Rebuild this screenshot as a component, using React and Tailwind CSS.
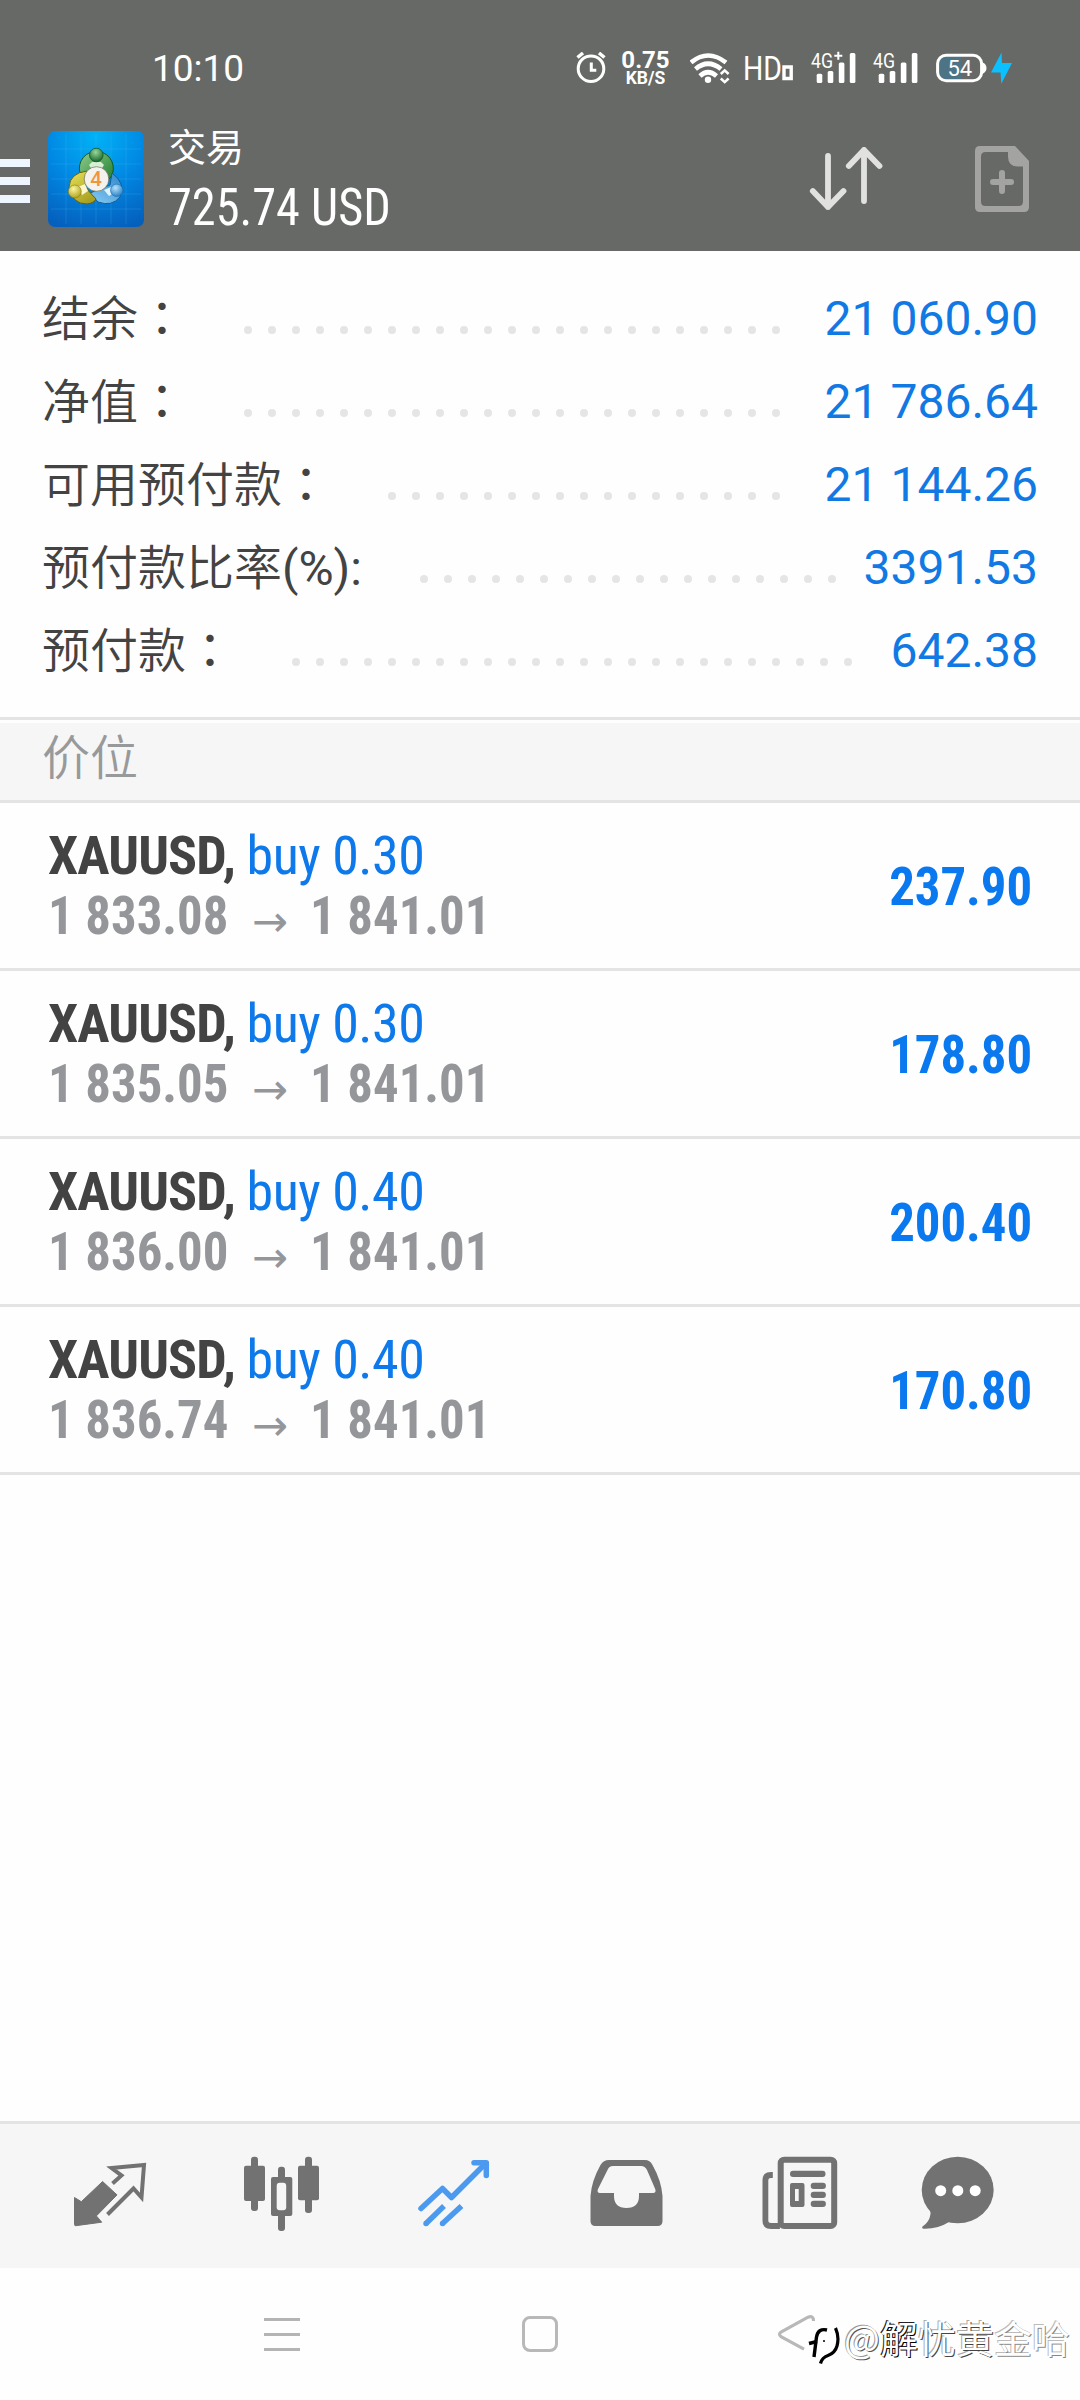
const summary = [
  { name: "结余", suffix: "：", value: "21 060.90", dots: 23 },
  { name: "净值", suffix: "：", value: "21 786.64", dots: 23 },
  { name: "可用预付款", suffix: "：", value: "21 144.26", dots: 17 },
  { name: "预付款比率", suffix: "(%):", value: "3391.53", dots: 18 },
  { name: "预付款", suffix: "：", value: "642.38", dots: 24 },
];

const positions = [
  { symbol: "XAUUSD", side: "buy 0.30", open: "1 833.08", current: "1 841.01", profit: "237.90" },
  { symbol: "XAUUSD", side: "buy 0.30", open: "1 835.05", current: "1 841.01", profit: "178.80" },
  { symbol: "XAUUSD", side: "buy 0.40", open: "1 836.00", current: "1 841.01", profit: "200.40" },
  { symbol: "XAUUSD", side: "buy 0.40", open: "1 836.74", current: "1 841.01", profit: "170.80" },
];

function Signal({ label, plus }) {
  return (
    <svg className="h-8 w-[45px] shrink-0 overflow-visible" viewBox="811 52 45 32" fill="#fff">
      <text x="811" y="67.5" fontSize="19.5" textLength="22" lengthAdjust="spacingAndGlyphs" className="font-['Roboto']">
        {label}
      </text>
      {plus && <path d="M834.3 55.8h8M838.3 51.8v8" stroke="#fff" strokeWidth="2" />}
      <rect x="816.7" y="73.7" width="5.6" height="9.3" rx="1.5" />
      <rect x="827.7" y="71" width="5.6" height="12" rx="1.5" />
      <rect x="838.8" y="62.5" width="5.6" height="20.5" rx="1.5" />
      <rect x="849.8" y="53" width="5.6" height="30" rx="1.5" />
    </svg>
  );
}

function StatusBar() {
  return (
    <div className="flex h-[118px] items-center pt-[18px] pr-[68px] pl-[152px] font-['Roboto',sans-serif]">
      <span className="text-[37px] leading-none">10:10</span>
      {/* Alarm */}
      <svg className="ml-auto h-8 w-[30px]" viewBox="576 54 30 32" fill="none" stroke="#fff">
        <circle cx="591" cy="70.7" r="12.8" strokeWidth="3" />
        <path d="M577.5 59.5l5.5-4.5M604.5 59.5l-5.5-4.5" strokeWidth="3.5" />
        <path d="M591.3 64.5v7.8h5" strokeWidth="3" />
      </svg>
      <div className="ml-[14px] flex w-[51px] flex-col items-center font-bold">
        <span className="text-[24px] leading-[20px]">0.75</span>
        <span className="text-[17.5px] leading-[16px]">KB/S</span>
      </div>
      {/* Wifi */}
      <svg className="ml-[19px] h-8 w-10" viewBox="690 52 40 32" fill="none" stroke="#fff">
        <path d="M691 62.5Q708 48.5 726 62.5" strokeWidth="4.6" />
        <path d="M695.5 69Q708 58.5 721 69" strokeWidth="4.6" />
        <path d="M700 76Q708 68.5 716.5 76" strokeWidth="4.6" />
        <circle cx="708" cy="79.7" r="3.2" fill="#fff" stroke="none" />
        <path d="M720.8 74l3.9-3.6 3.9 3.6M720.8 78.5l3.9 3.6 3.9-3.6" strokeWidth="2.6" />
      </svg>
      <svg className="ml-[14px] h-8 w-[50px] overflow-visible" viewBox="744 52 50 32" fill="#fff">
        <text x="743" y="80" fontSize="33" textLength="39" lengthAdjust="spacingAndGlyphs" className="font-['Roboto']">
          HD
        </text>
        <path d="M784 67h7.2v11.5H784z" fill="none" stroke="#fff" strokeWidth="3.4" />
      </svg>
      <div className="ml-[17px] flex gap-[17px]">
        <Signal label="4G" plus />
        <Signal label="4G" />
      </div>
      {/* Battery */}
      <svg className="ml-[17px] h-8 w-[77px]" viewBox="935 52 77 32" fill="none">
        <path d="M946 55.3h15v25.4h-15q-8.5 0-8.5-8.5v-8.4q0-8.5 8.5-8.5z" fill="#4c7485" />
        <rect x="937.6" y="55.3" width="44" height="25.4" rx="8.5" stroke="#fff" strokeWidth="3" />
        <path d="M982 62q4.5 2 4.5 6t-4.5 6z" fill="#fff" />
        <text x="947.5" y="75.7" fontSize="22" fill="#fff" className="font-['Roboto']">
          54
        </text>
        <path d="M1001.5 52.5l-10.5 20h9.5l.8 11.3 10.7-20.8h-10z" fill="#0bc0ff" />
      </svg>
    </div>
  );
}

function AppLogo() {
  return (
    <svg className="ml-[18px] h-24 w-24 shrink-0" viewBox="0 0 96 96">
      <defs>
        <radialGradient id="sky" cx="0.5" cy="0.05" r="1">
          <stop offset="0" stopColor="#02b2f6" />
          <stop offset="0.5" stopColor="#0089e4" />
          <stop offset="1" stopColor="#0560bd" />
        </radialGradient>
        <linearGradient id="green" x1="0" y1="0" x2="1" y2="1">
          <stop offset="0" stopColor="#8fce8f" />
          <stop offset="1" stopColor="#1e7a2c" />
        </linearGradient>
        <linearGradient id="yellow" x1="0" y1="0" x2="0.6" y2="1">
          <stop offset="0" stopColor="#e9e35a" />
          <stop offset="1" stopColor="#a8a022" />
        </linearGradient>
        <linearGradient id="blue" x1="1" y1="0" x2="0.3" y2="1">
          <stop offset="0" stopColor="#2f86cc" />
          <stop offset="1" stopColor="#7cc4ef" />
        </linearGradient>
        <radialGradient id="greenHead" cx="0.45" cy="0.3" r="0.7">
          <stop offset="0" stopColor="#9ad79b" />
          <stop offset="1" stopColor="#17682a" />
        </radialGradient>
        <radialGradient id="yellowHead" cx="0.4" cy="0.3" r="0.7">
          <stop offset="0" stopColor="#fbf6a0" />
          <stop offset="1" stopColor="#b3a520" />
        </radialGradient>
        <radialGradient id="blueHead" cx="0.4" cy="0.3" r="0.7">
          <stop offset="0" stopColor="#b5e2fb" />
          <stop offset="1" stopColor="#2a83c9" />
        </radialGradient>
      </defs>
      <rect width="96" height="96" rx="7" fill="url(#sky)" />
      <path
        d="M18 3v90M33 3v90M48 3v90M63 3v90M78 3v90M3 18h90M3 33h90M3 48h90M3 63h90M3 78h90"
        stroke="#5cc4f5"
        strokeOpacity="0.25"
        strokeWidth="0.8"
      />
      <path d="M32 42A17 17 0 1 1 63 46L56 53 34 42z" fill="url(#green)" stroke="#12591f" strokeWidth="1" />
      <path d="M64 42Q78 52 72 66Q64 76 50 71L42 62 62 54z" fill="url(#blue)" stroke="#155a97" strokeWidth="1" />
      <path d="M39 40Q22 42 21 56Q24 73 39 73Q46 72 48 68L37 56z" fill="url(#yellow)" stroke="#665f12" strokeWidth="1" />
      <path d="M41 34l3-3h9l3 3-4 6h-7z" fill="#d5f0d4" />
      <path d="M30 56l7-3 3 7-6 4z" fill="#fbf7c8" />
      <path d="M56 59l7-3 1 7-3 2z" fill="#dff3ff" />
      <circle cx="48.3" cy="24" r="6.8" fill="url(#greenHead)" stroke="#12591f" strokeWidth="0.8" />
      <circle cx="26.8" cy="60.5" r="6.5" fill="url(#yellowHead)" stroke="#857a18" strokeWidth="0.6" />
      <circle cx="68.7" cy="59.3" r="6.2" fill="url(#blueHead)" stroke="#1c69ad" strokeWidth="0.6" />
      <circle cx="48.5" cy="48" r="12.3" fill="#f4f2ee" stroke="#5b5b3a" strokeWidth="0.6" />
      <text x="48" y="55.3" textAnchor="middle" fontSize="20.5" fill="#f0953e" className="font-['Roboto'] font-medium">
        4
      </text>
    </svg>
  );
}

function Header() {
  return (
    <header className="h-[251px] bg-[#676966] text-white">
      <StatusBar />
      <div className="flex h-[122px] items-center pr-[51px]">
        <div className="mt-1 flex w-[30px] flex-col gap-2.5">
          <div className="h-2 bg-[#edf6fe]" />
          <div className="h-2 bg-[#edf6fe]" />
          <div className="h-2 bg-[#edf6fe]" />
        </div>
        <AppLogo />
        <div className="ml-6 flex flex-col">
          <span className="h-[53px] font-['Noto_Sans_CJK_SC',sans-serif] text-[38px] leading-[49px]">交易</span>
          <span className="h-[66px] origin-left scale-x-[0.92] font-['Roboto_Condensed',sans-serif] text-[52.5px] leading-[69px] font-[450]">
            725.74 USD
          </span>
        </div>
        <svg
          className="ml-auto h-[66px] w-[76px]"
          viewBox="808 146 76 66"
          fill="none"
          stroke="#e1e2e0"
          strokeWidth="5.8"
          strokeLinecap="round"
          strokeLinejoin="round"
        >
          <path d="M828 156v51M812.8 191L828 207l15.5-16" />
          <path d="M864 201v-51M848.8 166L864 150l15.5 16" />
        </svg>
        <svg className="ml-[91px] h-[66px] w-[54px]" viewBox="975 146 54 66" fill="#a3a4a2">
          <path
            fillRule="evenodd"
            d="M980 146h35l14 15v46q0 5-5 5h-44q-5 0-5-5v-56q0-5 5-5zm5.5 6q-4.5 0-4.5 4.5v45q0 4.5 4.5 4.5h33q4.5 0 4.5-4.5v-35h-5q-10 0-10-10v-4.5z"
          />
          <path d="M1002 173v18M993 182h18" stroke="#a3a4a2" strokeWidth="6" strokeLinecap="round" />
        </svg>
      </div>
    </header>
  );
}

function SummaryRow({ row }) {
  return (
    <div className="flex h-[83px] items-center">
      <span className="-mt-[3px] ml-[-1px] font-['Roboto','Noto_Sans_CJK_TC',sans-serif] text-[48px] leading-[80px] whitespace-nowrap text-[#434343]">
        <span className="font-['Noto_Sans_CJK_SC'] font-[350]">{row.name}</span>
        {row.suffix}
      </span>
      <div className="mt-[22px] ml-[58px] flex gap-4">
        {Array.from({ length: row.dots }, (_, i) => (
          <i key={i} className="size-2 rounded-full bg-[#e5e5e5]" />
        ))}
      </div>
      <span className="ml-auto font-['Roboto',sans-serif] text-[48px] leading-none whitespace-nowrap text-[#1179e4]">
        {row.value}
      </span>
    </div>
  );
}

function PositionRow({ item }) {
  return (
    <div className="flex h-[168px] items-center justify-between border-b-[3px] border-[#e4e4e4] px-[48px] font-['Roboto_Condensed',sans-serif] text-[54px]">
      <div className="flex flex-col">
        <div className="h-[59px] leading-[57px] tracking-[-0.9px] whitespace-nowrap">
          <span className="font-bold text-[#434343]">{item.symbol}, </span>
          <span className="tracking-[-0.5px] text-[#0d79ea]">{item.side}</span>
        </div>
        <div className="flex h-[59px] items-center leading-[59px] font-bold whitespace-nowrap text-[#949699]">
          <span className="w-[182px] origin-left scale-x-[0.94]">{item.open}</span>
          <span className="w-[80px] pt-3 text-center font-['DejaVu_Sans'] text-[43px] font-normal">→</span>
          <span className="origin-left scale-x-[0.94]">{item.current}</span>
        </div>
      </div>
      <span className="origin-right scale-x-[0.94] pt-0.5 font-bold text-[#0a78ee]">{item.profit}</span>
    </div>
  );
}

function TabIcon({ x, children }) {
  return (
    <svg className="h-[144px] w-[172px]" viewBox={`${x} 24 172 144`} fill="#727272">
      {children}
    </svg>
  );
}

function TabBar() {
  return (
    <nav className="flex h-[147px] border-t-[3px] border-[#e4e4e4] bg-[#f6f6f6] pl-6">
      {/* Quotes */}
      <TabIcon x={24}>
        <path
          d="M74.5 97.5l6.8 4.2L102.6 81.5l14.4 13.4-20.6 21 5.3 6.3-26 3.5q-1.2 0-1.2-1.2z"
          stroke="#727272"
          strokeLinejoin="round"
        />
        <path
          d="M112.5 83.5l9-8-10-7.5 32.5-3-2.5 32.5-8-9-26 26"
          fill="none"
          stroke="#727272"
          strokeWidth="4"
          strokeLinejoin="miter"
        />
      </TabIcon>
      {/* Charts */}
      <TabIcon x={196}>
        <rect x="244" y="65.7" width="21" height="35.3" rx="2" />
        <rect x="251" y="56.7" width="7" height="54.3" rx="3" />
        <rect x="298" y="65.7" width="21" height="34.5" rx="2" />
        <rect x="305" y="56.7" width="7" height="56.3" rx="3" />
        <rect x="278" y="66.7" width="7" height="64.3" rx="3" />
        <rect x="271" y="77" width="21.3" height="39" rx="2" />
        <rect x="276.7" y="82.7" width="9.5" height="27.5" rx="3" fill="#f6f6f6" />
      </TabIcon>
      {/* Trade */}
      <TabIcon x={368}>
        <g fill="none" stroke="#4b9aef" strokeWidth="5.5" strokeLinejoin="round">
          <path d="M421 108.5l21.5-20 9 9 34-34" strokeLinecap="round" />
          <path d="M474 62.8h12.3v12.6" strokeLinecap="round" />
          <path d="M426 123.5l18-17.5M442.5 123.5l19-17.5" />
          <path d="M426 123.5h.01M442.5 123.5h.01" strokeLinecap="round" />
        </g>
      </TabIcon>
      {/* History */}
      <TabIcon x={540}>
        <path
          fillRule="evenodd"
          d="M609 60h36q5 0 7.5 5 9 16 10 31v25q0 5-5 5h-62q-5 0-5-5V96q1-15 10-31 3-5 8.5-5zm4 6q-4 0-5.5 4l-9.5 19q-1.5 4 2 4h14v3q0 12 12.5 12t12.5-12v-3h14q3.5 0 2.2-4l-8.2-19q-2-4-6-4z"
        />
      </TabIcon>
      {/* News */}
      <TabIcon x={712}>
        <rect x="780.7" y="59.7" width="53.5" height="66.3" rx="3.5" fill="none" stroke="#727272" strokeWidth="6" />
        <path d="M772.8 75h-2q-5.4 0-5.4 5v41q0 5 5.5 5h9" fill="none" stroke="#727272" strokeWidth="5.8" />
        <rect x="790" y="70.7" width="35.5" height="6.3" rx="3" />
        <path fillRule="evenodd" d="M792 83h10.5q2 0 2 2v20q0 2-2 2H792q-2 0-2-2V85q0-2 2-2zm3 6v12h3.7V89z" />
        <rect x="810.7" y="82.7" width="15.2" height="6.3" rx="3" />
        <rect x="810.7" y="91.7" width="15.2" height="6.3" rx="3" />
        <rect x="810.7" y="100.7" width="15.2" height="6.3" rx="3" />
      </TabIcon>
      {/* Mailbox */}
      <TabIcon x={884}>
        <ellipse cx="957.7" cy="90" rx="36" ry="33.2" />
        <path d="M927 106q4 5 3.5 8-1 8-8 12.5-1 2 1 2.3 14 .5 26-7z" />
        <circle cx="940.7" cy="90.7" r="5.5" fill="#fff" />
        <circle cx="957.8" cy="90.7" r="5.5" fill="#fff" />
        <circle cx="975.2" cy="90.7" r="5.5" fill="#fff" />
      </TabIcon>
    </nav>
  );
}

function SystemNav() {
  return (
    <div className="relative flex h-[132px] items-center">
      <div className="ml-[264px] flex w-9 flex-col gap-3">
        <div className="h-[3px] bg-[#b4b4b4]" />
        <div className="h-[3px] bg-[#b4b4b4]" />
        <div className="h-[3px] bg-[#b4b4b4]" />
      </div>
      <div className="ml-[222px] size-9 rounded-[8px] border-[3px] border-[#b8b8b8]" />
      <svg className="ml-[219px] h-10 w-10" viewBox="777 214 40 40" fill="none">
        <path
          d="M813.5 221q0-6-5.5-3.8L781 232q-3 2.3 0 4.6l23 12.5"
          stroke="#b8b8b8"
          strokeWidth="3.2"
        />
      </svg>
      {/* Author watermark on top of the navigation keys */}
      <div className="absolute top-[40px] left-[807px] flex items-center whitespace-nowrap">
        <svg className="mt-[18px] h-[40px] w-[34px]" viewBox="0 0 34 40" fill="none">
          <path d="M5 28L9 10 20 2l10 2 1 18-8 8z" fill="#fff" />
          <path d="M20 4Q11 2 9.5 11L7 31" stroke="#000" strokeWidth="3.4" />
          <path d="M2 17.5l8-2" stroke="#000" strokeWidth="3.4" />
          <path d="M28.5 2q4 9 1.5 18-2 7-9 9.5-6 2-7.5 8" stroke="#000" strokeWidth="3.2" />
          <circle cx="17" cy="15" r="1" fill="#000" />
        </svg>
        <span className="ml-[3px] font-['Noto_Sans_CJK_SC',sans-serif] text-[38px] leading-[50px] text-white">
          <span className="[text-shadow:1px_1px_0_#555,-1px_-1px_0_#999]">@</span>
          <span className="[text-shadow:1px_1px_0_#000,-1px_-1px_0_#222]">解</span>
          <span className="[text-shadow:1px_1px_0_#444,-1px_-1px_0_#aaa]">忧黄</span>
          <span className="[text-shadow:1px_1px_0_#888,-1px_-1px_0_#bbb]">金哈</span>
        </span>
      </div>
    </div>
  );
}

export default function App() {
  return (
    <div className="flex h-[2400px] w-[1080px] flex-col overflow-hidden bg-[#fefefe]">
      <Header />
      <section className="h-[469px] border-b-[3px] border-[#e4e4e4] pt-[26px] pr-[42px] pl-[43px]">
        {summary.map((row) => (
          <SummaryRow key={row.name} row={row} />
        ))}
      </section>
      <div className="mt-[3px] h-[80px] border-b-[3px] border-[#e4e4e4] bg-[#f6f6f6] pl-[42px] font-['Noto_Sans_CJK_SC',sans-serif] text-[48px] leading-[63px] font-[350] text-[#98999b]">
        价位
      </div>
      <main className="flex-1">
        {positions.map((item, i) => (
          <PositionRow key={i} item={item} />
        ))}
      </main>
      <TabBar />
      <SystemNav />
    </div>
  );
}
